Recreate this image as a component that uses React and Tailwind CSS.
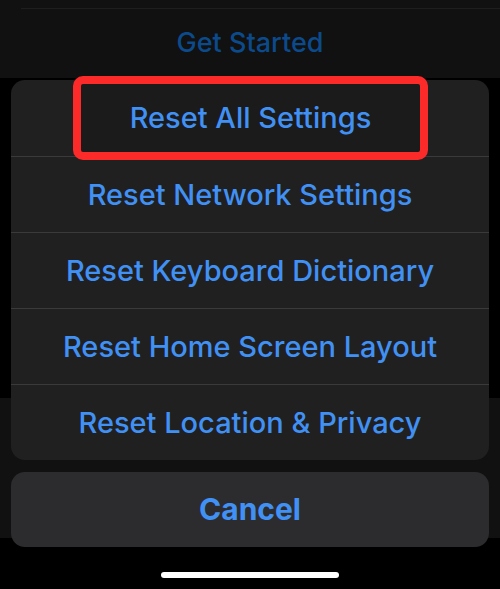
import React from 'react';

const options = [
  'Reset All Settings',
  'Reset Network Settings',
  'Reset Keyboard Dictionary',
  'Reset Home Screen Layout',
  'Reset Location & Privacy',
];

export default function App() {
  return (
    <div
      className="relative w-[500px] h-[589px] overflow-hidden bg-black"
      style={{ fontFamily: 'Inter, "Noto Sans", sans-serif' }}
    >
      {/* dimmed page behind the sheet */}
      <div className="flex flex-col">
        <div className="h-[78px] bg-[#111111] flex flex-col">
          <div className="h-[8px]" />
          <div className="ml-[21px] h-px bg-[#1e1e1e]" />
          <div className="flex-1 flex items-center justify-center text-[27px] font-medium text-[#0b4a8b]">
            Get Started
          </div>
        </div>
        <div className="h-[320px] bg-black" />
        <div className="h-[140px] bg-[#111111]" />
        <div className="h-[51px] bg-black" />
      </div>

      {/* action sheet */}
      <div className="absolute inset-0 flex flex-col px-[11px] pt-[80px]">
        <div className="relative rounded-[14px] bg-[#202020]">
          {options.map((label, i) => (
            <div
              key={label}
              className={`h-[76px] flex items-center justify-center text-[29px] font-medium text-[#4191f5] ${
                i > 0 ? 'border-t border-[#3a3a3a]' : ''
              }`}
            >
              {label}
            </div>
          ))}
          <div className="absolute left-[62px] top-[-4px] w-[355px] h-[84px] rounded-[10px] border-[8px] border-[#fd2a2a] bg-[#1b1b1b] flex items-center justify-center text-[29px] font-medium text-[#4191f5]">
            Reset All Settings
          </div>
        </div>
        <div className="mt-[12px] h-[75px] rounded-[14px] bg-[#2c2c2e] flex items-center justify-center text-[30px] font-bold text-[#4191f5]">
          Cancel
        </div>
        <div className="mt-[25px] mx-auto w-[178px] h-[6px] rounded-full bg-white" />
      </div>
    </div>
  );
}
